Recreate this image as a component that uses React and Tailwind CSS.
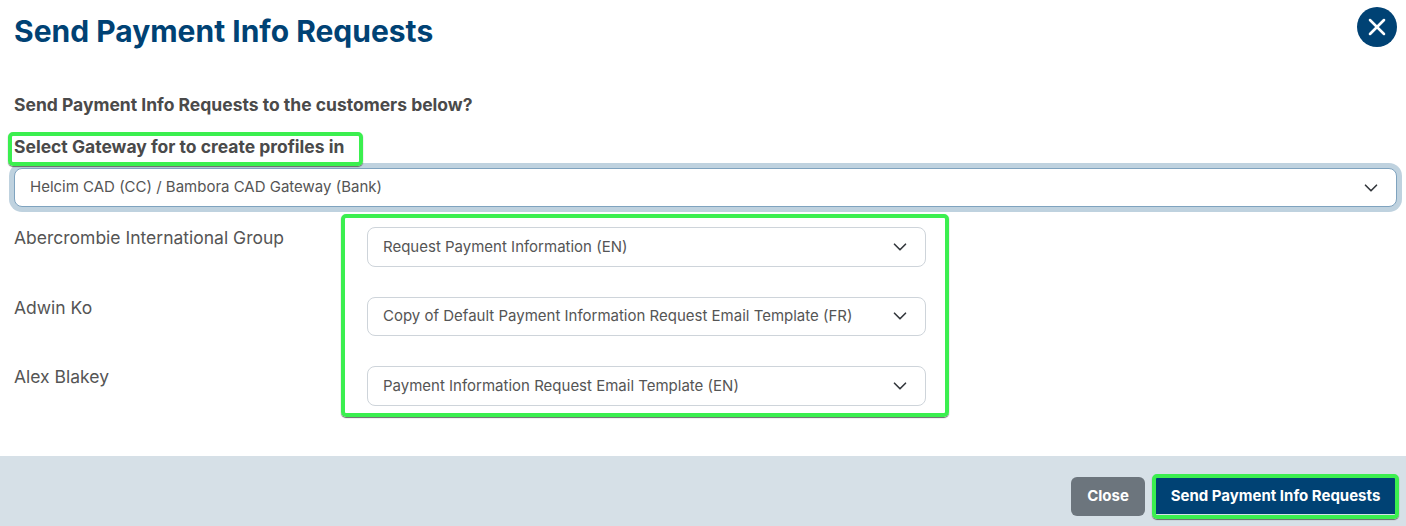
import React from "react";
import { ChevronDown, X } from "lucide-react";

const rows = [
  { name: "Abercrombie International Group", template: "Request Payment Information (EN)" },
  { name: "Adwin Ko", template: "Copy of Default Payment Information Request Email Template (FR)" },
  { name: "Alex Blakey", template: "Payment Information Request Email Template (EN)" },
];

const Highlight = ({ className }) => (
  <div className={`absolute border-[4px] border-[#3bef4f] rounded-[5px] shadow-[0_1px_1px_#666] pointer-events-none ${className}`} />
);

const SelectBox = ({ children, className }) => (
  <div className={`flex items-center justify-between bg-white rounded-[8px] text-[15px] text-[#555] ${className}`}>
    <span>{children}</span>
    <ChevronDown size={22} strokeWidth={1.8} className="text-[#33373c]" />
  </div>
);

export default function App() {
  return (
    <div className="w-[1406px] h-[526px] bg-white overflow-hidden flex flex-col font-['Inter',sans-serif]">
      <div className="h-[456px] px-[14px] flex flex-col">
        <div className="flex justify-between pt-[6px]">
          <h1 className="text-[30px] leading-[50px] font-bold text-[#004274]">Send Payment Info Requests</h1>
          <button className="w-[40px] h-[40px] mt-[1px] mr-[-5px] rounded-full bg-[#004274] flex items-center justify-center text-white">
            <X size={28} strokeWidth={2.2} />
          </button>
        </div>

        <p className="mt-[37px] text-[17.5px] leading-[24px] font-bold text-[#4a4a4a]">Send Payment Info Requests to the customers below?</p>

        <div className="relative mt-[18px]">
          <label className="block text-[17.5px] leading-[24px] font-bold text-[#4a4a4a]">Select Gateway for to create profiles in</label>
          <Highlight className="left-[-6px] top-[-3px] w-[355px] h-[34px]" />
        </div>

        <SelectBox className="mt-[9px] mr-[-5px] h-[39px] pl-[15px] pr-[14px] border border-[#7fa3bf] shadow-[0_0_0_5px_#bfd2df]">
          Helcim CAD (CC) / Bambora CAD Gateway (Bank)
        </SelectBox>

        <div className="relative mt-[20px] flex flex-col gap-[30px]">
          {rows.map((row) => (
            <div key={row.name} className="flex h-[39.5px]">
              <div className="w-[353px] text-[17.5px] leading-[22px] text-[#555]">{row.name}</div>
              <SelectBox className="w-[559px] h-[39.5px] pl-[15px] pr-[14px] border border-[#ced4da]">{row.template}</SelectBox>
            </div>
          ))}
          <Highlight className="left-[327px] top-[-13px] w-[608px] h-[203px]" />
        </div>
      </div>

      <div className="h-[70px] bg-[#d6e0e7] flex justify-end items-start gap-[11px] pt-[21px] pr-[11px]">
        <button className="w-[74px] h-[39px] rounded-[6px] bg-[#6c757d] text-white text-[15px] font-bold">Close</button>
        <div className="relative">
          <button className="block w-[239px] h-[36px] mt-[1px] bg-[#004274] text-white text-[15px] font-bold">Send Payment Info Requests</button>
          <Highlight className="left-[-4px] top-[-3px] w-[247px] h-[45px]" />
        </div>
      </div>
    </div>
  );
}
